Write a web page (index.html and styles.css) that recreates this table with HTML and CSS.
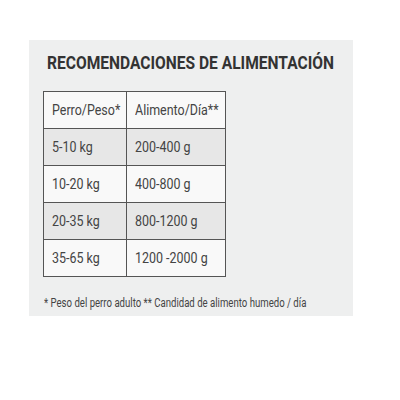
FILE: index.html
```html
<!DOCTYPE html>
<html>
<head>
<meta charset="utf-8">
<link rel="stylesheet" href="styles.css">
</head>
<body>
<div class="panel">
  <h2 class="title"><span>RECOMENDACIONES DE ALIMENTACIÓN</span></h2>
  <table class="feed">
    <colgroup><col class="c1"><col class="c2"></colgroup>
    <tr class="head"><td><span>Perro/Peso*</span></td><td><span>Alimento/Día**</span></td></tr>
    <tr class="odd"><td><span>5-10 kg</span></td><td><span>200-400 g</span></td></tr>
    <tr class="even"><td><span>10-20 kg</span></td><td><span>400-800 g</span></td></tr>
    <tr class="odd"><td><span>20-35 kg</span></td><td><span>800-1200 g</span></td></tr>
    <tr class="even"><td><span>35-65 kg</span></td><td><span>1200 -2000 g</span></td></tr>
  </table>
  <p class="note"><span>* Peso del perro adulto ** Candidad de alimento humedo / día</span></p>
</div>
</body>
</html>
```
FILE: styles.css
```css
html, body { margin: 0; padding: 0; background: #fff; }
body { font-family: Roboto, "Liberation Sans", sans-serif; }
.panel {
  margin: 40px 0 0 29px;
  width: 324px;
  height: 276px;
  box-sizing: border-box;
  background: #eeefef;
  padding: 14px 0 0 14px;
}
.title {
  margin: 0 0 0 4px;
  font-size: 18px;
  font-weight: 700;
  color: #333;
  line-height: 18px;
  white-space: nowrap;
}
.title span { display: inline-block; transform: scaleX(0.865); transform-origin: left center; }
.feed {
  margin-top: 19px;
  border-collapse: collapse;
  table-layout: fixed;
  width: 182px;
  font-size: 14px;
  color: #444;
}
.c1 { width: 83px; }
.c2 { width: 99px; }
.feed td {
  border: 1px solid #555;
  height: 37px;
  padding: 0 0 0 8px;
  box-sizing: border-box;
  white-space: nowrap;
  overflow: hidden;
}
.feed td span { display: inline-block; transform: scaleX(0.89); transform-origin: left center; }
.head td, .even td { background: #f9f9f9; }
.odd td { background: #e7e7e7; }
.note {
  margin: 19px 0 0 1px;
  font-size: 12px;
  color: #444;
  white-space: nowrap;
}
.note span { display: inline-block; transform: scaleX(0.8); transform-origin: left center; }
```
